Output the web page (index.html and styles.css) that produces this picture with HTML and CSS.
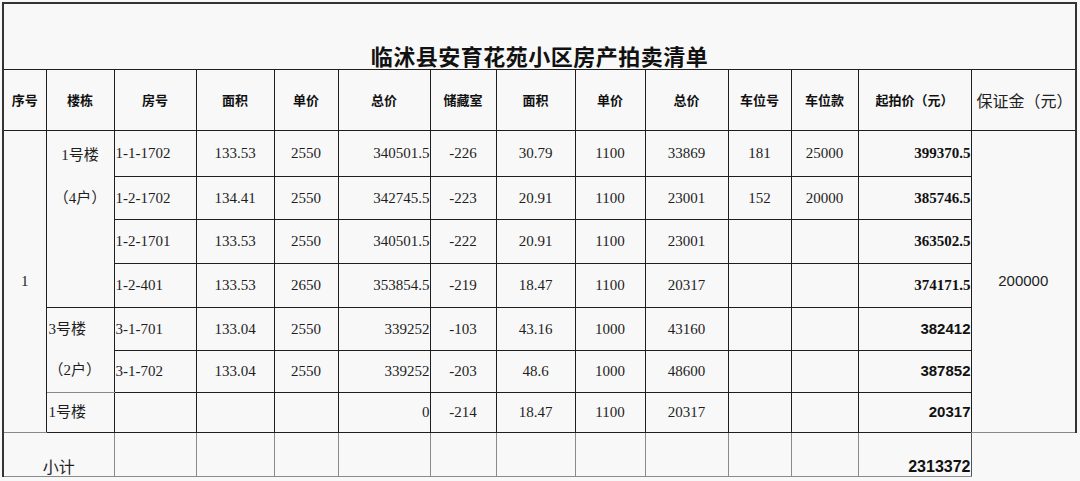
FILE: index.html
```html
<!DOCTYPE html>
<html lang="zh-CN">
<head>
<meta charset="utf-8">
<title>临沭县安育花苑小区房产拍卖清单</title>
<link rel="stylesheet" href="styles.css">
</head>
<body>
<table class="sheet">
  <colgroup>
    <col class="c1"><col class="c2"><col class="c3"><col class="c4"><col class="c5"><col class="c6"><col class="c7">
    <col class="c8"><col class="c9"><col class="c10"><col class="c11"><col class="c12"><col class="c13"><col class="c14">
  </colgroup>
  <tr class="r-title">
    <td colspan="14" class="title edge-t edge-l edge-r">临沭县安育花苑小区房产拍卖清单</td>
  </tr>
  <tr class="r-head">
    <td class="hd edge-l">序号</td>
    <td class="hd">楼栋</td>
    <td class="hd">房号</td>
    <td class="hd">面积</td>
    <td class="hd">单价</td>
    <td class="hd">总价</td>
    <td class="hd">储藏室</td>
    <td class="hd">面积</td>
    <td class="hd">单价</td>
    <td class="hd">总价</td>
    <td class="hd">车位号</td>
    <td class="hd">车位款</td>
    <td class="hd">起拍价（元）</td>
    <td class="deposit-hd edge-r">保证金（元）</td>
  </tr>
  <tr class="r1">
    <td rowspan="7" class="seq edge-l">1</td>
    <td rowspan="4" class="bld bld-top cjk">1号楼<br>（4户）</td>
    <td class="room">1-1-1702</td><td>133.53</td><td>2550</td><td class="num-r">340501.5</td>
    <td>-226</td><td>30.79</td><td>1100</td><td>33869</td><td>181</td><td>25000</td>
    <td class="start">399370.5</td>
    <td rowspan="7" class="deposit edge-r">200000</td>
  </tr>
  <tr class="r2">
    <td class="room">1-2-1702</td><td>134.41</td><td>2550</td><td class="num-r">342745.5</td>
    <td>-223</td><td>20.91</td><td>1100</td><td>23001</td><td>152</td><td>20000</td>
    <td class="start">385746.5</td>
  </tr>
  <tr class="r3">
    <td class="room">1-2-1701</td><td>133.53</td><td>2550</td><td class="num-r">340501.5</td>
    <td>-222</td><td>20.91</td><td>1100</td><td>23001</td><td></td><td></td>
    <td class="start">363502.5</td>
  </tr>
  <tr class="r4">
    <td class="room">1-2-401</td><td>133.53</td><td>2650</td><td class="num-r">353854.5</td>
    <td>-219</td><td>18.47</td><td>1100</td><td>20317</td><td></td><td></td>
    <td class="start">374171.5</td>
  </tr>
  <tr class="r5">
    <td rowspan="2" class="bld bld-left cjk">3号楼<br>（2户）</td>
    <td class="room">3-1-701</td><td>133.04</td><td>2550</td><td class="num-r">339252</td>
    <td>-103</td><td>43.16</td><td>1000</td><td>43160</td><td></td><td></td>
    <td class="start sans">382412</td>
  </tr>
  <tr class="r6">
    <td class="room">3-1-702</td><td>133.04</td><td>2550</td><td class="num-r">339252</td>
    <td>-203</td><td>48.6</td><td>1000</td><td>48600</td><td></td><td></td>
    <td class="start sans">387852</td>
  </tr>
  <tr class="r7">
    <td class="bld-single cjk">1号楼</td>
    <td></td><td></td><td></td><td class="num-r">0</td>
    <td>-214</td><td>18.47</td><td>1100</td><td>20317</td><td></td><td></td>
    <td class="start sans">20317</td>
  </tr>
  <tr class="r-total">
    <td colspan="2" class="total-label edge-l">小计</td>
    <td></td><td></td><td></td><td></td><td></td><td></td><td></td><td></td><td></td><td></td>
    <td class="total-val">2313372</td>
  </tr>
</table>
</body>
</html>
```

FILE: styles.css
```css
html, body {
  margin: 0;
  background: #f8f8f8;
}

body {
  padding: 2px 0 0 2px;
  font-family: "Liberation Serif", "Noto Sans CJK SC", serif;
  color: #1e1e1e;
}

.sheet {
  border-collapse: collapse;
  table-layout: fixed;
  width: 1073px;
}

.c1 { width: 43px; }
.c2 { width: 68px; }
.c3 { width: 82px; }
.c4 { width: 78px; }
.c5 { width: 64px; }
.c6 { width: 92px; }
.c7 { width: 66px; }
.c8 { width: 79px; }
.c9 { width: 70px; }
.c10 { width: 83px; }
.c11 { width: 63px; }
.c12 { width: 67px; }
.c13 { width: 113px; }
.c14 { width: 105px; }

.sheet td {
  border: 1px solid #1f1f1f;
  padding: 0 1px;
  text-align: center;
  vertical-align: middle;
  font-size: 15px;
  line-height: 18px;
  white-space: nowrap;
  overflow: hidden;
}

.sheet td.edge-t { border-top: 2px solid #333; }
.sheet td.edge-l { border-left: 2px solid #333; }
.sheet td.edge-r { border-right: 2px solid #333; }

.r-title { height: 66px; }
.r-head { height: 61px; }
.r1 { height: 46px; }
.r2 { height: 43px; }
.r3 { height: 44px; }
.r4 { height: 44px; }
.r5 { height: 43px; }
.r6 { height: 42px; }
.r7 { height: 40px; }
.r-total { height: 44px; }

.sheet td.title {
  font-family: "Noto Sans CJK SC", sans-serif;
  font-size: 22px;
  font-weight: 700;
  line-height: 26px;
  vertical-align: bottom;
  padding-bottom: 1px;
  color: #111;
  letter-spacing: 0.5px;
}

.sheet td.hd {
  font-family: "Noto Sans CJK SC", sans-serif;
  font-size: 13px;
  font-weight: 700;
  color: #111;
}

.sheet td.deposit-hd {
  font-family: "Noto Sans CJK SC", sans-serif;
  font-size: 16px;
  font-weight: 400;
  text-align: left;
  padding-left: 5px;
  color: #222;
}

.cjk {
  font-family: "Liberation Serif", "Noto Sans CJK SC", sans-serif;
}

.sheet td.bld-top {
  vertical-align: top;
  padding-top: 3px;
  line-height: 43px;
}

.sheet td.bld-left {
  text-align: left;
  padding-left: 2px;
  line-height: 41px;
  border-bottom-color: #888;
}

.sheet td.bld-single {
  text-align: left;
  padding-left: 2px;
  border-top-color: #888;
}

.sheet td.room {
  text-align: left;
  padding-left: 1px;
}

.sheet td.num-r {
  text-align: right;
  padding-right: 0;
}

.sheet td.start {
  text-align: right;
  padding-right: 0;
  font-weight: 700;
  color: #111;
}

.sheet td.sans {
  font-family: "Liberation Sans", sans-serif;
}

.sheet td.seq {
  border-bottom-color: #888;
}

.sheet td.deposit {
  font-family: "Liberation Sans", sans-serif;
  border-bottom: 1px solid #888;
  color: #222;
}

.r-total td {
  border-color: #8a8a8a;
}

.sheet td.total-label {
  font-family: "Noto Sans CJK SC", sans-serif;
  font-size: 16px;
  vertical-align: bottom;
  line-height: 20px;
  padding-bottom: 0;
  overflow: visible;
  color: #222;
}

.sheet td.total-val {
  font-family: "Liberation Sans", sans-serif;
  font-weight: 700;
  font-size: 16px;
  text-align: right;
  vertical-align: bottom;
  padding-right: 0;
  padding-bottom: 0;
  color: #111;
  border-right-color: #555;
}
```
